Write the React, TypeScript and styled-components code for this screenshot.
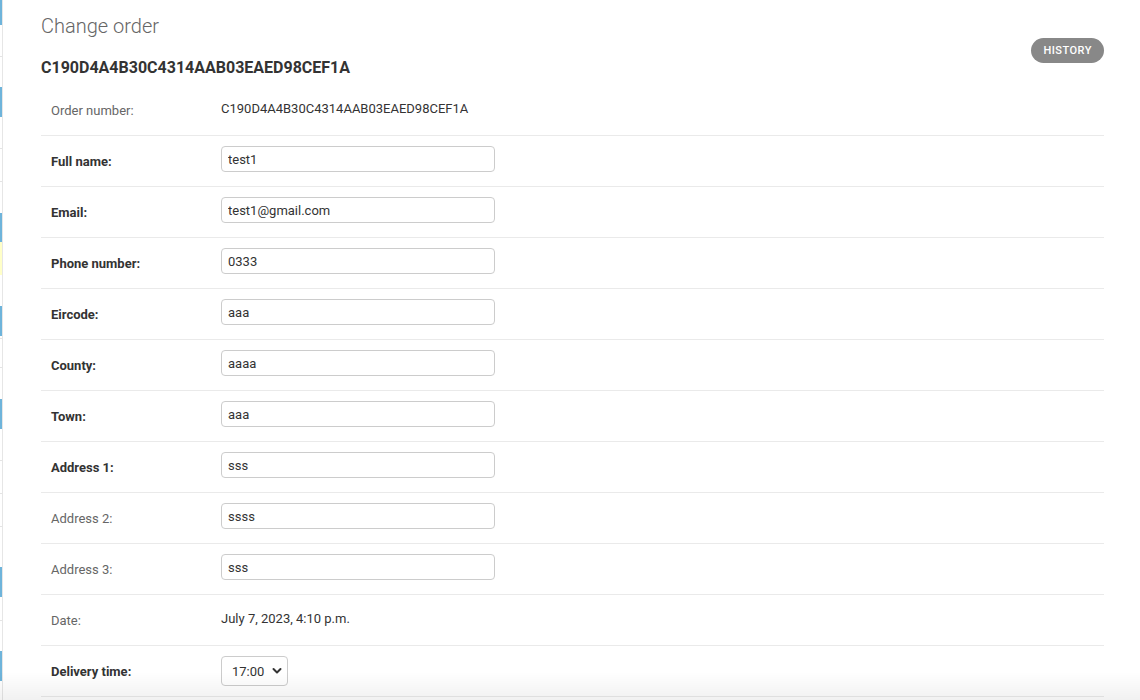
import React from "react";
import styled, { createGlobalStyle } from "styled-components";

const GlobalStyle = createGlobalStyle`
  html, body { margin: 0; padding: 0; background: #fff; }
  body {
    font-family: Roboto, "Liberation Sans", Arial, sans-serif;
    color: #333;
    -webkit-font-smoothing: antialiased;
  }
  * { box-sizing: border-box; }
`;

const Page = styled.div`
  display: flex;
  min-height: 700px;
`;

const Strip = styled.nav`
  width: 3px;
  flex: none;
  display: flex;
  flex-direction: column;
  border-right: 1px solid #e6e6e6;
  overflow: hidden;
`;

const Segment = styled.div<{ $h: number; $c: string; $line?: boolean }>`
  height: ${(p) => p.$h}px;
  flex: none;
  background: ${(p) => p.$c};
  border-bottom: ${(p) => (p.$line ? "1px solid #e4e4e4" : "none")};
`;

const Content = styled.main`
  flex: 1;
  padding: 14px 36px 0 38px;
`;

const Header = styled.div`
  display: flex;
  justify-content: space-between;
  align-items: flex-start;
`;

const Titles = styled.div`
  display: flex;
  flex-direction: column;
`;

const Title = styled.h1`
  margin: 0;
  font-size: 20px;
  line-height: 24px;
  font-weight: 300;
  color: #666;
`;

const Subtitle = styled.h2`
  margin: 20px 0 0;
  font-size: 16px;
  line-height: 20px;
  font-weight: 700;
  color: #333;
`;

const HistoryButton = styled.a`
  margin-top: 24px;
  display: block;
  height: 25px;
  line-height: 25px;
  padding: 0 12px;
  border-radius: 15px;
  background: #888;
  color: #fff;
  font-size: 11px;
  font-weight: 500;
  letter-spacing: 0.5px;
  text-transform: uppercase;
  text-decoration: none;
`;

const Fieldset = styled.fieldset`
  margin: 7px 0 0;
  padding: 0;
  border: none;
  min-width: 0;
`;

const Row = styled.div`
  display: flex;
  align-items: flex-start;
  height: 51px;
  padding: 10px;
  border-bottom: 1px solid #eaeaea;
`;

const Label = styled.label<{ $required?: boolean }>`
  width: 170px;
  flex: none;
  padding: 7px 10px 0 0;
  font-size: 13px;
  line-height: 18px;
  font-weight: ${(p) => (p.$required ? 700 : 400)};
  color: ${(p) => (p.$required ? "#333" : "#666")};
`;

const ReadValue = styled.div`
  padding: 5px 0 4px;
  font-size: 13px;
  line-height: 18px;
  color: #333;
`;

const TextInput = styled.input`
  width: 274px;
  height: 26px;
  padding: 5px 6px;
  border: 1px solid #ccc;
  border-radius: 4px;
  font-family: Roboto, "Liberation Sans", Arial, sans-serif;
  font-size: 13px;
  color: #333;
  background: #fff;
  outline: none;
`;

const SelectWrap = styled.div`
  position: relative;
  width: 67px;
  height: 30px;
`;

const Select = styled.select`
  appearance: none;
  -webkit-appearance: none;
  width: 67px;
  height: 30px;
  padding: 0 20px 0 10px;
  border: 1px solid #ccc;
  border-radius: 4px;
  background: #fff;
  font-family: Roboto, "Liberation Sans", Arial, sans-serif;
  font-size: 13px;
  color: #333;
  outline: none;
`;

const Chevron = styled.svg`
  position: absolute;
  right: 6px;
  top: 11px;
  pointer-events: none;
`;

const BottomShade = styled.div`
  position: fixed;
  left: 0;
  right: 0;
  bottom: 0;
  height: 28px;
  pointer-events: none;
  background: linear-gradient(to bottom, rgba(0, 0, 0, 0), rgba(0, 0, 0, 0.055));
`;

const BLUE = "#6eb4db";
const YELLOW = "#ffffc8";
const WHITE = "#ffffff";

const segments: { h: number; c: string; line?: boolean }[] = [
  { h: 25, c: BLUE },
  { h: 32, c: WHITE, line: true },
  { h: 30, c: WHITE },
  { h: 30, c: BLUE },
  { h: 32, c: WHITE, line: true },
  { h: 33, c: WHITE, line: true },
  { h: 31, c: WHITE },
  { h: 29, c: BLUE },
  { h: 33, c: YELLOW },
  { h: 31, c: WHITE },
  { h: 30, c: BLUE },
  { h: 3, c: WHITE, line: true },
  { h: 29, c: WHITE, line: true },
  { h: 31, c: WHITE },
  { h: 30, c: BLUE },
  { h: 32, c: WHITE, line: true },
  { h: 33, c: WHITE, line: true },
  { h: 33, c: WHITE, line: true },
  { h: 40, c: WHITE },
  { h: 30, c: BLUE },
  { h: 24, c: WHITE, line: true },
  { h: 30, c: WHITE },
  { h: 30, c: BLUE },
  { h: 30, c: WHITE },
];

type Field =
  | { kind: "read"; label: string; value: string; required?: boolean }
  | { kind: "input"; label: string; value: string; required?: boolean }
  | { kind: "select"; label: string; value: string; required?: boolean };

const fields: Field[] = [
  { kind: "read", label: "Order number:", value: "C190D4A4B30C4314AAB03EAED98CEF1A" },
  { kind: "input", label: "Full name:", value: "test1", required: true },
  { kind: "input", label: "Email:", value: "test1@gmail.com", required: true },
  { kind: "input", label: "Phone number:", value: "0333", required: true },
  { kind: "input", label: "Eircode:", value: "aaa", required: true },
  { kind: "input", label: "County:", value: "aaaa", required: true },
  { kind: "input", label: "Town:", value: "aaa", required: true },
  { kind: "input", label: "Address 1:", value: "sss", required: true },
  { kind: "input", label: "Address 2:", value: "ssss" },
  { kind: "input", label: "Address 3:", value: "sss" },
  { kind: "read", label: "Date:", value: "July 7, 2023, 4:10 p.m." },
  { kind: "select", label: "Delivery time:", value: "17:00", required: true },
];

export default function App() {
  return (
    <>
      <GlobalStyle />
      <Page>
        <Strip>
          {segments.map((s, i) => (
            <Segment key={i} $h={s.h} $c={s.c} $line={s.line} />
          ))}
        </Strip>
        <Content>
          <Header>
            <Titles>
              <Title>Change order</Title>
              <Subtitle>C190D4A4B30C4314AAB03EAED98CEF1A</Subtitle>
            </Titles>
            <HistoryButton href="#">History</HistoryButton>
          </Header>
          <Fieldset>
            {fields.map((f) => (
              <Row key={f.label}>
                <Label $required={f.required}>{f.label}</Label>
                {f.kind === "read" && <ReadValue>{f.value}</ReadValue>}
                {f.kind === "input" && <TextInput type="text" defaultValue={f.value} />}
                {f.kind === "select" && (
                  <SelectWrap>
                    <Select defaultValue={f.value}>
                      <option>16:00</option>
                      <option>17:00</option>
                      <option>18:00</option>
                    </Select>
                    <Chevron width="10" height="8" viewBox="0 0 10 8">
                      <path d="M1.5 2 L5 5.5 L8.5 2" fill="none" stroke="#333" strokeWidth="2" strokeLinecap="round" strokeLinejoin="round" />
                    </Chevron>
                  </SelectWrap>
                )}
              </Row>
            ))}
          </Fieldset>
        </Content>
      </Page>
      <BottomShade />
    </>
  );
}
